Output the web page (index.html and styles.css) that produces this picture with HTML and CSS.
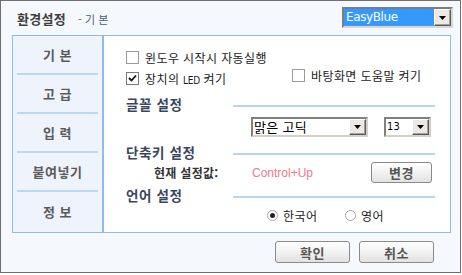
FILE: index.html
```html
<!DOCTYPE html>
<html lang="ko">
<head>
<meta charset="utf-8">
<title>환경설정</title>
<link rel="stylesheet" href="styles.css">
</head>
<body>
<div class="window">
  <div class="header">
    <div class="title"><span class="title-main">환경설정</span><span class="title-sub">- 기 본</span></div>
    <div class="skin-select">
      <span class="skin-value">EasyBlue</span>
      <span class="arrow-btn"><svg width="7" height="4" viewBox="0 0 7 4"><path d="M0 0h7L3.5 4z" fill="#000"/></svg></span>
    </div>
  </div>

  <div class="panel">
    <div class="sidebar">
      <div class="tab">기 본</div>
      <div class="tab">고 급</div>
      <div class="tab">입 력</div>
      <div class="tab">붙여넣기</div>
      <div class="tab last">정 보</div>
    </div>
    <div class="content">
      <div class="row row-first">
        <span class="check"></span><span class="label">윈도우 시작시 자동실행</span>
      </div>
      <div class="row row-second">
        <div class="opt-left"><span class="check checked"><svg width="9" height="9" viewBox="0 0 9 9"><path d="M1 4l2.5 2.5L8 1.5" stroke="#111" stroke-width="1.8" fill="none"/></svg></span><span class="label">장치의 <span class="latin">LED</span> 켜기</span></div>
        <div class="opt-right"><span class="check"></span><span class="label">바탕화면 도움말 켜기</span></div>
      </div>

      <div class="heading h-font"><span class="heading-text">글꼴 설정</span><span class="heading-line"></span></div>
      <div class="select-row">
        <div class="combo combo-font"><span class="combo-value">맑은 고딕</span><span class="arrow-btn"><svg width="7" height="4" viewBox="0 0 7 4"><path d="M0 0h7L3.5 4z" fill="#000"/></svg></span></div>
        <div class="combo combo-size"><span class="combo-value latin">13</span><span class="arrow-btn"><svg width="7" height="4" viewBox="0 0 7 4"><path d="M0 0h7L3.5 4z" fill="#000"/></svg></span></div>
      </div>

      <div class="heading h-key"><span class="heading-text">단축키 설정</span><span class="heading-line"></span></div>
      <div class="key-row">
        <span class="key-label">현재 설정값:</span>
        <span class="key-value">Control+Up</span>
        <button class="btn btn-change">변경</button>
      </div>

      <div class="heading h-lang"><span class="heading-text">언어 설정</span><span class="heading-line"></span></div>
      <div class="radio-row">
        <span class="radio-item"><span class="radio on"></span><span class="label">한국어</span></span>
        <span class="radio-item"><span class="radio"></span><span class="label">영어</span></span>
      </div>
    </div>
  </div>

  <div class="footer">
    <button class="btn btn-footer">확인</button>
    <button class="btn btn-footer">취소</button>
  </div>
</div>
</body>
</html>
```

FILE: styles.css
```css
* { box-sizing: border-box; }
html, body { margin: 0; padding: 0; background: #ffffff; }
body {
  font-family: "Noto Sans CJK KR", "Noto Sans", sans-serif;
  font-size: 12px;
  color: #222;
}
.window {
  width: 461px;
  height: 273px;
  border: 1px solid #6f6f6f;
  background: #f5f9fd;
  display: flex;
  flex-direction: column;
}
.header {
  height: 34px;
  display: flex;
  align-items: flex-start;
  justify-content: space-between;
  padding: 6px 7px 0 16px;
}
.title { display: flex; align-items: baseline; padding-top: 2px; }
.title-main { font-size: 13px; font-weight: bold; color: #3d3d3d; letter-spacing: 0.3px; }
.title-sub { font-size: 11px; color: #4d5a73; margin-left: 12px; }

.skin-select {
  width: 111px;
  height: 21px;
  display: flex;
  border: 2px solid #7c7c7c;
  border-right-color: #d8d8d8;
  border-bottom-color: #d8d8d8;
  background: #3399ff;
}
.skin-value {
  flex: 1;
  font-family: "DejaVu Sans", sans-serif;
  font-size: 12px;
  color: #fff;
  line-height: 17px;
  padding-left: 2px;
  letter-spacing: -0.4px;
}
.arrow-btn {
  width: 17px;
  display: flex;
  align-items: center;
  justify-content: center;
  background: #ece9e4;
  border: 1px solid #fff;
  border-right-color: #5a5a5a;
  border-bottom-color: #5a5a5a;
  box-shadow: inset -1px -1px 0 #a0a0a0;
}

.panel {
  margin-left: 11px;
  width: 439px;
  height: 198px;
  border: 1px solid #8dbbea;
  display: flex;
}
.sidebar {
  width: 91px;
  background: #eef3fc;
  border-right: 2px solid #8dbbea;
  display: flex;
  flex-direction: column;
}
.tab {
  height: 39px;
  display: flex;
  align-items: center;
  justify-content: center;
  font-size: 13px;
  font-weight: bold;
  color: #5a5a5a;
  letter-spacing: 0.5px;
  border-bottom: 2px solid #bcd7f2;
  margin: 0 4px;
}
.tab.last { border-bottom: none; }

.content {
  flex: 1;
  background: #fff;
  padding: 11px 15px 0 22px;
  display: flex;
  flex-direction: column;
}
.row { height: 20px; display: flex; align-items: center; }
.row-second { margin-top: 1px; }
.opt-left { width: 166px; display: flex; align-items: center; }
.opt-right { display: flex; align-items: center; margin-top: -6px; }
.check {
  width: 13px;
  height: 13px;
  border: 1px solid #9a9a9a;
  background: #fff;
  display: inline-flex;
  align-items: center;
  justify-content: center;
  margin-right: 6px;
  flex: none;
}
.check.checked { border-color: #7a7a7a; }
.label { font-size: 12px; color: #1a1a1a; white-space: nowrap; letter-spacing: 0.4px; }
.latin { font-family: "DejaVu Sans Condensed", "DejaVu Sans", sans-serif; font-size: 10px; letter-spacing: -0.3px; }

.heading { height: 20px; display: flex; align-items: center; }
.h-font { margin-top: 6px; }
.h-key { margin-top: 5px; }
.h-lang { margin-top: 2px; }
.heading-text { width: 107px; font-size: 13.5px; font-weight: bold; color: #3a4660; letter-spacing: 0.6px; }
.heading-line { flex: 1; height: 2px; background: #b8d5f1; margin-top: 4px; }

.select-row { display: flex; margin-top: 3px; padding-left: 125px; gap: 16px; height: 20px; }
.combo {
  height: 20px;
  display: flex;
  border: 2px solid #808080;
  border-right-color: #d4d0c8;
  border-bottom-color: #d4d0c8;
  background: #fff;
}
.combo-font { width: 117px; }
.combo-size { width: 47px; }
.combo-value { flex: 1; font-size: 13px; color: #000; line-height: 16px; padding-left: 1px; letter-spacing: 0.3px; }
.combo-value.latin { font-size: 11px; line-height: 16px; }

.key-row { height: 21px; margin-top: 0; display: flex; align-items: center; }
.key-label { width: 126px; padding-left: 28px; font-size: 12px; font-weight: bold; color: #333; white-space: nowrap; letter-spacing: 0.3px; }
.key-value { width: 119px; font-family: "Liberation Sans", sans-serif; font-size: 12px; color: #f07a8a; }

.btn {
  font-family: "Noto Sans CJK KR", sans-serif;
  font-size: 13px;
  font-weight: bold;
  color: #555;
  letter-spacing: 0.5px;
  border: 1px solid #8a8a8a;
  border-radius: 3px;
  background: linear-gradient(#ffffff, #f2f2f2 50%, #e2e2e2);
  padding: 0;
  display: flex;
  align-items: center;
  justify-content: center;
}
.btn-change { width: 61px; height: 21px; }

.radio-row { height: 20px; margin-top: 0; display: flex; align-items: center; padding-left: 141px; }
.radio-item { display: flex; align-items: center; width: 78px; }
.radio {
  width: 11px;
  height: 11px;
  border-radius: 50%;
  border: 1px solid #a8a8a8;
  background: #fff;
  margin-right: 5px;
  position: relative;
}
.radio.on::after {
  content: "";
  position: absolute;
  left: 2px; top: 2px;
  width: 5px; height: 5px;
  border-radius: 50%;
  background: #222;
}

.footer {
  display: flex;
  justify-content: flex-end;
  gap: 9px;
  padding: 8px 26px 0 0;
}
.btn-footer { width: 75px; height: 22px; }
```
